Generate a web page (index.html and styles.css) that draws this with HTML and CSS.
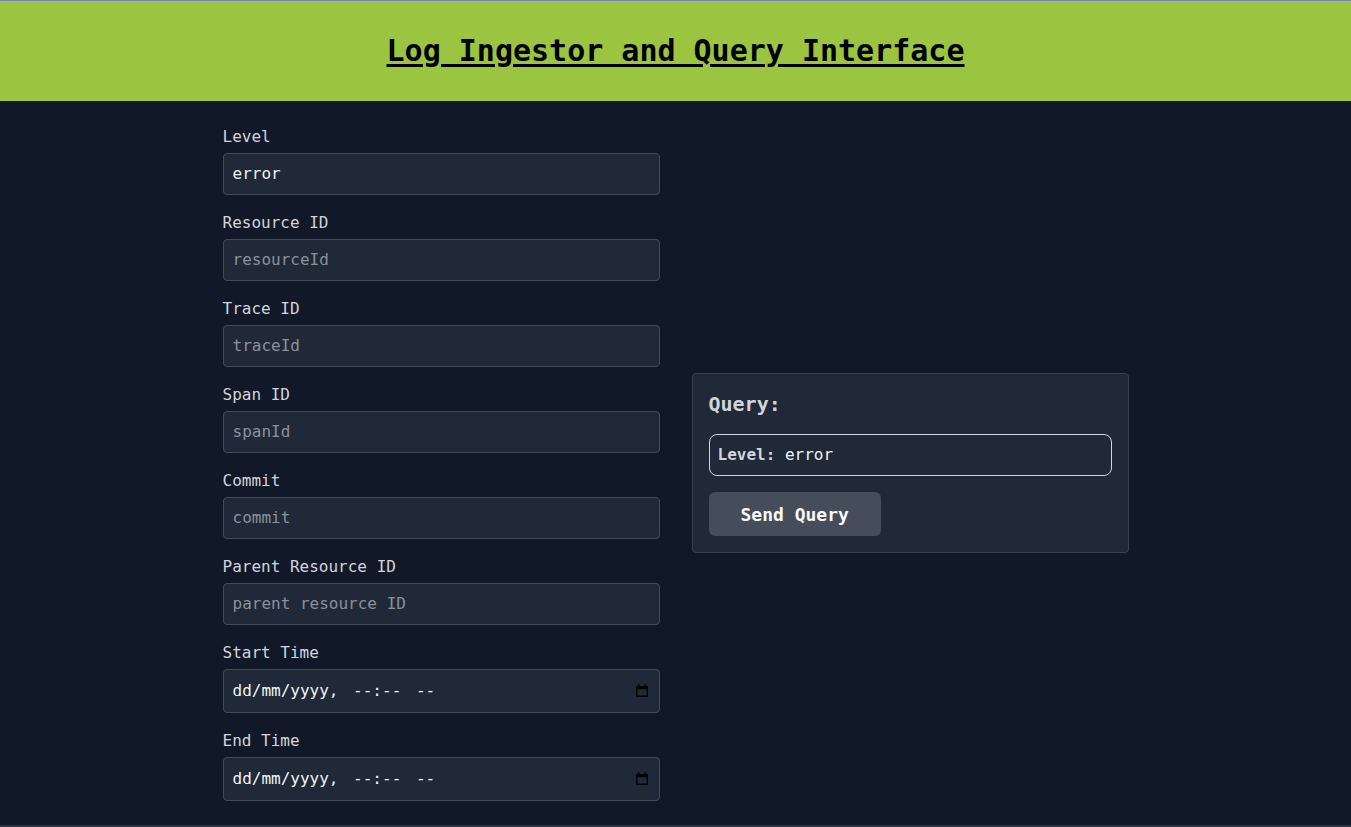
FILE: index.html
```html
<!DOCTYPE html>
<html lang="en-GB">
<head>
<meta charset="utf-8">
<title>Log Ingestor and Query Interface</title>
<link rel="stylesheet" href="styles.css">
</head>
<body>
<header class="topbar">
  <h1 class="title">Log Ingestor and Query Interface</h1>
</header>
<main class="main">
  <div class="layout">
    <form class="fields">
      <div class="field">
        <label class="label" for="level">Level</label>
        <input class="input" id="level" type="text" value="error" placeholder="level">
      </div>
      <div class="field">
        <label class="label" for="resourceId">Resource ID</label>
        <input class="input" id="resourceId" type="text" placeholder="resourceId">
      </div>
      <div class="field">
        <label class="label" for="traceId">Trace ID</label>
        <input class="input" id="traceId" type="text" placeholder="traceId">
      </div>
      <div class="field">
        <label class="label" for="spanId">Span ID</label>
        <input class="input" id="spanId" type="text" placeholder="spanId">
      </div>
      <div class="field">
        <label class="label" for="commit">Commit</label>
        <input class="input" id="commit" type="text" placeholder="commit">
      </div>
      <div class="field">
        <label class="label" for="parent">Parent Resource ID</label>
        <input class="input" id="parent" type="text" placeholder="parent resource ID">
      </div>
      <div class="field">
        <label class="label" for="start">Start Time</label>
        <div class="date-wrap">
          <input class="input input-date" id="start" type="text" placeholder="dd/mm/yyyy, --:-- --">
          <svg class="cal" width="14" height="14" viewBox="0 0 14 14" aria-hidden="true">
            <rect x="3" y="0.5" width="1.6" height="3" fill="#000"/>
            <rect x="9.4" y="0.5" width="1.6" height="3" fill="#000"/>
            <rect x="1" y="2" width="12" height="11" rx="1" fill="#000"/>
            <rect x="2.4" y="5.2" width="9.2" height="6.4" fill="#1f2937"/>
          </svg>
        </div>
      </div>
      <div class="field">
        <label class="label" for="end">End Time</label>
        <div class="date-wrap">
          <input class="input input-date" id="end" type="text" placeholder="dd/mm/yyyy, --:-- --">
          <svg class="cal" width="14" height="14" viewBox="0 0 14 14" aria-hidden="true">
            <rect x="3" y="0.5" width="1.6" height="3" fill="#000"/>
            <rect x="9.4" y="0.5" width="1.6" height="3" fill="#000"/>
            <rect x="1" y="2" width="12" height="11" rx="1" fill="#000"/>
            <rect x="2.4" y="5.2" width="9.2" height="6.4" fill="#1f2937"/>
          </svg>
        </div>
      </div>
    </form>
    <section class="panel">
      <h2 class="panel-title">Query:</h2>
      <div class="query-box"><span class="query-key">Level:</span> <span class="query-val">error</span></div>
      <button class="send" type="button">Send Query</button>
    </section>
  </div>
</main>
</body>
</html>
```

FILE: styles.css
```css
* { box-sizing: border-box; }
html, body {
  margin: 0;
  padding: 0;
}
body {
  background: #111827;
  font-family: "DejaVu Sans Mono", "Liberation Mono", monospace;
  color: #d1d5db;
  font-size: 16px;
  line-height: 24px;
}
.topbar {
  height: 101px;
  background: #9bc440;
  border-top: 1px solid #7382bd;
  display: flex;
  align-items: center;
  justify-content: center;
}
.title {
  margin: 0;
  font-size: 30px;
  line-height: 40px;
  font-weight: bold;
  color: #000;
  text-decoration: underline;
  text-decoration-thickness: 3px;
  text-underline-offset: 3px;
}
.main {
  padding: 24px 0;
  border-bottom: 2px solid #2b3240;
}
.layout {
  width: 906px;
  margin: 0 auto;
  display: grid;
  grid-template-columns: 437px 437px;
  column-gap: 32px;
  align-items: center;
}
.fields {
  display: flex;
  flex-direction: column;
  gap: 16px;
  margin: 0;
}
.field {
  display: flex;
  flex-direction: column;
  gap: 4px;
}
.label {
  color: #d1d5db;
  font-size: 16px;
  line-height: 24px;
}
.input {
  height: 42px;
  width: 100%;
  background: #1f2937;
  border: 1px solid #434b58;
  border-radius: 4px;
  padding: 0 9px 2px;
  font-family: "DejaVu Sans Mono", "Liberation Mono", monospace;
  font-size: 16px;
  color: #f3f4f6;
  outline: none;
}
.input::placeholder {
  color: #8b919b;
}
.date-wrap {
  position: relative;
}
.input-date {
  height: 44px;
  padding-left: 9px;
  word-spacing: 5px;
}
.input-date::placeholder {
  color: #f3f4f6;
  word-spacing: 5px;
}
.cal {
  position: absolute;
  right: 11px;
  top: 15px;
}
.panel {
  background: #1f2937;
  border: 1px solid #3a414d;
  border-radius: 4px;
  padding: 16px;
}
.panel-title {
  margin: 0 0 16px;
  font-size: 20px;
  line-height: 28px;
  font-weight: bold;
  color: #d1d5db;
}
.query-box {
  height: 42px;
  border: 1px solid #d1d5db;
  border-radius: 8px;
  padding: 0 8px;
  line-height: 40px;
  white-space: pre;
  margin-bottom: 16px;
}
.query-key {
  font-weight: bold;
  color: #d1d5db;
}
.query-val {
  color: #f3f4f6;
}
.send {
  display: block;
  height: 44px;
  padding: 0 32px;
  background: #464d5a;
  border: none;
  border-radius: 6px;
  color: #f9fafb;
  font-family: "DejaVu Sans Mono", "Liberation Mono", monospace;
  font-size: 18px;
  font-weight: bold;
  cursor: pointer;
}
```
